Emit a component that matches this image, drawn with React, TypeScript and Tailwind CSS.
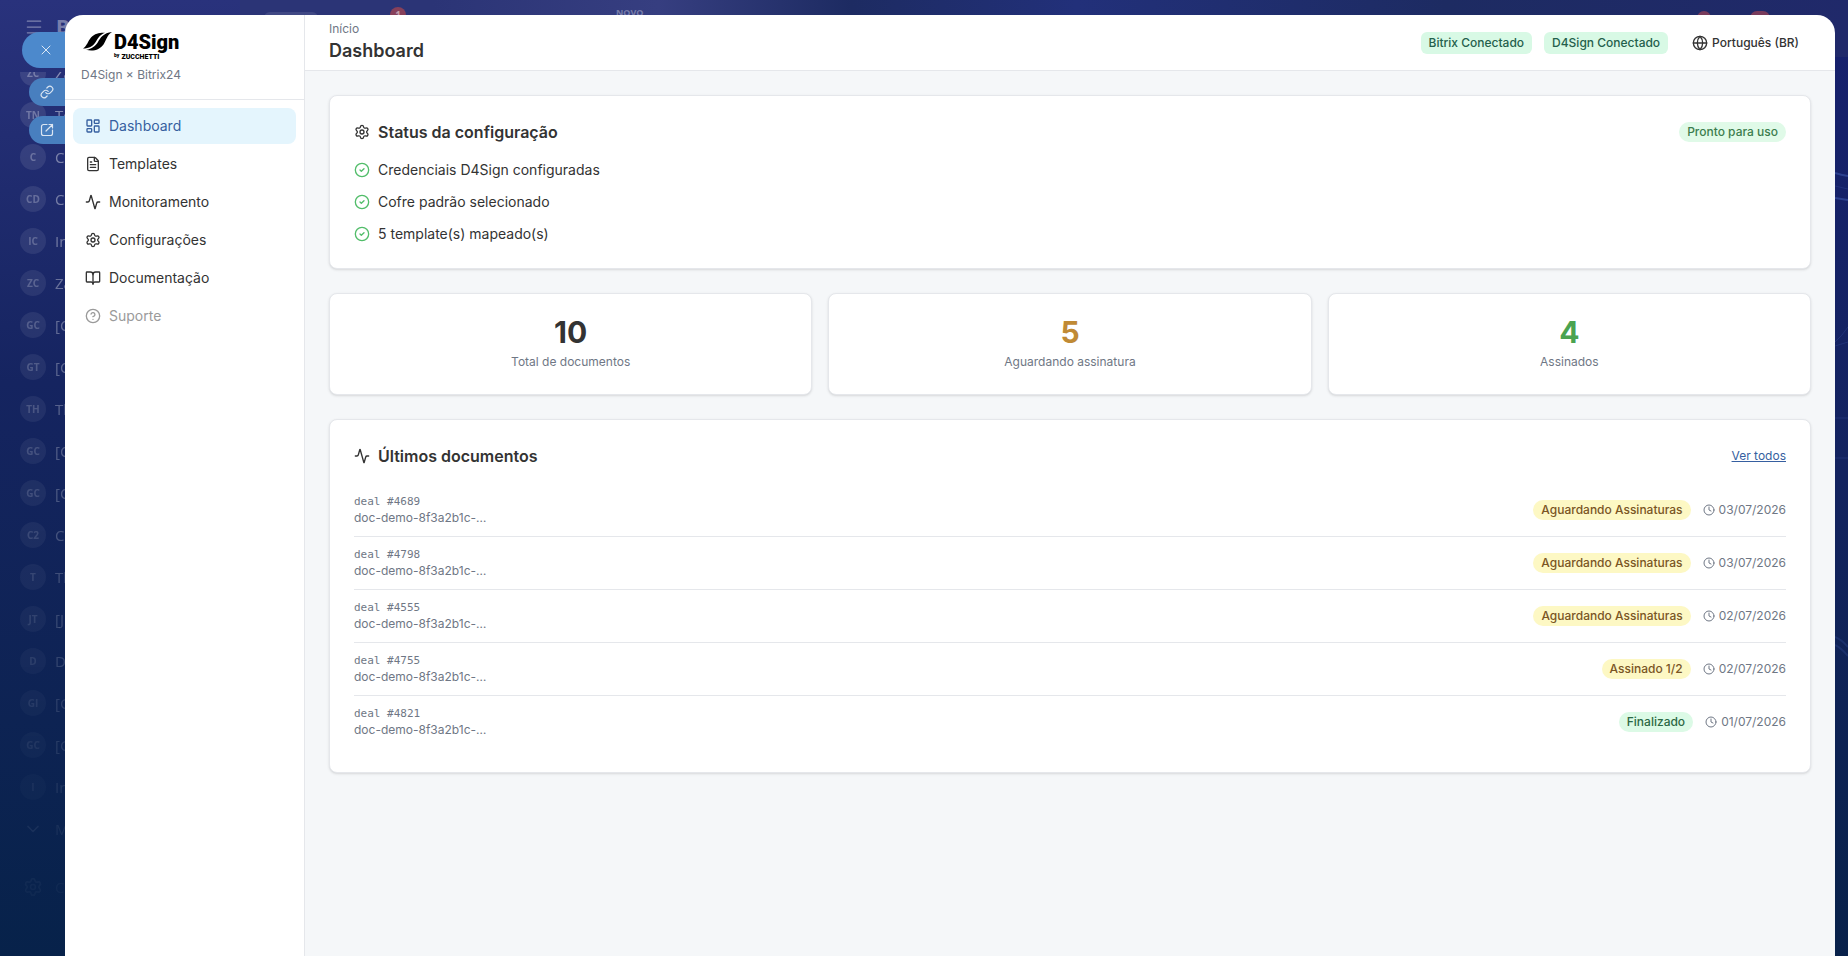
import {
    Activity,
    BookOpen,
    ChevronDown,
    CircleCheck,
    CircleQuestionMark,
    Clock,
    FileText,
    Globe,
    LayoutDashboard,
    Link,
    Menu,
    Settings,
    X,
} from "lucide-react";

const chats = [
    { initials: "ZC", name: "Za" },
    { initials: "TN", name: "To" },
    { initials: "C", name: "C" },
    { initials: "CD", name: "C" },
    { initials: "IC", name: "In" },
    { initials: "ZC", name: "Za" },
    { initials: "GC", name: "[C" },
    { initials: "GT", name: "[C" },
    { initials: "TH", name: "Th" },
    { initials: "GC", name: "[C" },
    { initials: "GC", name: "[C" },
    { initials: "C2", name: "C" },
    { initials: "T", name: "Th" },
    { initials: "JT", name: "[J" },
    { initials: "D", name: "D" },
    { initials: "GI", name: "[G" },
    { initials: "GC", name: "[G" },
    { initials: "I", name: "In" },
];

const navItems = [
    { label: "Dashboard", icon: LayoutDashboard, active: true },
    { label: "Templates", icon: FileText },
    { label: "Monitoramento", icon: Activity },
    { label: "Configurações", icon: Settings },
    { label: "Documentação", icon: BookOpen },
    { label: "Suporte", icon: CircleQuestionMark, disabled: true },
];

const checks = ["Credenciais D4Sign configuradas", "Cofre padrão selecionado", "5 template(s) mapeado(s)"];

const stats = [
    { value: 10, label: "Total de documentos", color: "text-[#333333]" },
    { value: 5, label: "Aguardando assinatura", color: "text-[#c08a35]" },
    { value: 4, label: "Assinados", color: "text-[#4aa350]" },
];

const documents = [
    { deal: "deal #4689", status: "Aguardando Assinaturas", date: "03/07/2026" },
    { deal: "deal #4798", status: "Aguardando Assinaturas", date: "03/07/2026" },
    { deal: "deal #4555", status: "Aguardando Assinaturas", date: "02/07/2026" },
    { deal: "deal #4755", status: "Assinado 1/2", date: "02/07/2026" },
    { deal: "deal #4821", status: "Finalizado", date: "01/07/2026", done: true },
];

function Logo() {
    return (
        <div className="flex items-start gap-0.5 pl-0.5 text-black">
            <svg viewBox="0 0 29 20" className="mt-px h-5 w-[29px]" fill="currentColor" aria-hidden="true">
                <path d="M0 16.5C4 14 5 9 8 5.500C12 1 18 .5 22 .8C17 3 15 6 13 9.500C10.500 14 6 16.500 0 16.500Z" />
                <path d="M29 0C24 3 23.500 8 20.500 12.500C17 17.500 10 20 3 17.800C9 17 12.500 14 15 10C17.500 5.500 20.500 1 29 0Z" />
            </svg>
            <div className="flex flex-col">
                <span className="font-[Roboto,sans-serif] text-[20px] font-black leading-[22px]">D4Sign</span>
                <span className="flex items-start gap-0.5 font-[Roboto,sans-serif] text-[7px] font-black leading-[8px]">
                    <span className="text-[5px] leading-[5px]">by</span>
                    <span>ZUCCHETTI</span>
                </span>
            </div>
        </div>
    );
}

// rounded frame with an arrow leaving its top right corner
function OpenIcon() {
    return (
        <svg viewBox="0 0 14 14" className="size-[14px]" fill="none" stroke="currentColor" strokeWidth="1.2" strokeLinecap="round" strokeLinejoin="round">
            <path d="M7 1.500H3.500a2 2 0 0 0-2 2v7a2 2 0 0 0 2 2h7a2 2 0 0 0 2-2V7" />
            <path d="M6 8L12.500 1.500M9 1.500h3.500V5" />
        </svg>
    );
}

// Bitrix24 page behind the slider
function Backdrop() {
    return (
        <div className="absolute inset-0 overflow-hidden bg-linear-to-b from-[#17206e] via-[#13235f] to-[#08214a] font-['Open_Sans',sans-serif]" aria-hidden="true">
            <div className="absolute left-60 right-0 top-0 h-[57px] bg-[linear-gradient(to_right,#2b3476_0%,#2b3476_12%,#363e80_26%,#1d2b62_38%,#22307a_52%,#1d2b62_75%,#20296a_100%)]">
                <div className="absolute left-6 top-3 h-8 w-[54px] rounded-md bg-white/10" />
                <span className="absolute left-[150px] top-[7px] size-4 rounded-full bg-[#87405a] text-center text-[10px] font-bold leading-4 text-white/50">1</span>
                <span className="absolute left-[376px] top-[7px] text-[9px] font-bold leading-[12px] text-white/35">NOVO</span>
                <span className="absolute right-[137px] top-[11px] size-[14px] rounded-full bg-[#783b5b]" />
                <span className="absolute right-[78px] top-[11px] h-[14px] w-5 rounded-full bg-[#783b5b]" />
            </div>
            <svg viewBox="0 0 13 956" className="absolute right-0 top-0 h-[956px] w-[13px]" fill="none" stroke="#5070c8" strokeOpacity="0.4">
                <path d="M0 173Q6 175 13 176M0 198L13 200" strokeWidth="2" />
                <path d="M0 186L13 189M0 342Q7 336 13 327M0 346L13 342M0 418H13M0 458H13" strokeOpacity="0.2" />
                <path d="M0 637Q7 640 13 647M0 645Q6 648 13 656" strokeWidth="2" strokeOpacity="0.18" />
            </svg>
            <div className="flex h-full w-60 flex-col bg-linear-to-b from-[#29327c] via-[#152460] via-40% to-[#07224a]">
                <div className="flex h-[72px] items-start gap-3 pl-6 pt-[17px] text-white/40">
                    <Menu className="size-5" strokeWidth={1.5} />
                    <span className="text-xl font-bold leading-5">B</span>
                </div>
                <div className="min-h-0 flex-1 overflow-hidden mask-b-from-0% mask-b-to-100%">
                    <ul className="-mt-5">
                        {chats.map((chat, index) => (
                            <li key={index} className="flex h-[42px] items-center gap-[9px] pl-5">
                                <span className="flex size-[26px] items-center justify-center rounded-full bg-white/10 text-[10px] font-bold text-white/30">
                                    {chat.initials}
                                </span>
                                <span className="text-[15px] text-white/45">{chat.name}</span>
                            </li>
                        ))}
                        <li className="flex h-[42px] items-center gap-3 pl-[23px] text-white/45">
                            <ChevronDown className="size-5" />
                            <span className="text-[15px]">M</span>
                        </li>
                        <li className="mt-4 flex h-[42px] items-center gap-3 pl-[23px] text-white/45">
                            <Settings className="size-5" />
                            <span className="text-[15px]">C</span>
                        </li>
                    </ul>
                </div>
            </div>
        </div>
    );
}

export default function App() {
    return (
        <div className="relative flex h-screen overflow-hidden pr-[13px] pt-[15px] font-[Inter,sans-serif] text-[#333333]">
            <Backdrop />

            {/* Slider controls */}
            <div className="relative flex w-[65px] shrink-0 flex-col items-end pt-[17px] text-white/80">
                <button aria-label="Fechar" className="flex h-9 w-[43px] items-center justify-center rounded-l-full bg-[#4c89cc] pl-1">
                    <X className="size-4" strokeWidth={1.5} />
                </button>
                <button aria-label="Copiar link" className="mt-[10px] flex h-7 w-9 items-center justify-center rounded-l-full bg-[#487fbf]">
                    <Link className="size-[14px]" strokeWidth={2} />
                </button>
                <button aria-label="Abrir em nova aba" className="mt-[10px] flex h-7 w-9 items-center justify-center rounded-l-full bg-[#487fbf]">
                    <OpenIcon />
                </button>
            </div>

            <div className="relative flex min-w-0 flex-1 overflow-hidden rounded-t-[18px] bg-white">
                <aside className="w-60 shrink-0 border-r border-[#e5e7eb]">
                    <div className="flex h-[85px] flex-col border-b border-[#e5e7eb] px-4 pt-4">
                        <Logo />
                        <span className="mt-1.5 text-xs text-[#6f7785]">D4Sign × Bitrix24</span>
                    </div>
                    <nav className="flex flex-col gap-0.5 p-2">
                        {navItems.map(({ label, icon: Icon, active, disabled }) => (
                            <a
                                key={label}
                                href="#"
                                className={`flex h-9 items-center gap-2 rounded-lg px-3 text-sm ${
                                    active ? "bg-[#e4f5fd] text-[#365fa0]" : disabled ? "text-[#9a9a9a]" : "text-[#333333]"
                                }`}
                            >
                                <Icon className="size-4" />
                                {label}
                            </a>
                        ))}
                    </nav>
                </aside>

                <div className="flex min-w-0 flex-1 flex-col">
                    <header className="flex h-14 shrink-0 items-center justify-between border-b border-[#e5e7eb] px-6">
                        <div className="flex flex-col">
                            <span className="text-xs text-[#6f7785]">Início</span>
                            <h1 className="text-lg font-semibold leading-7">Dashboard</h1>
                        </div>
                        <div className="flex items-center gap-3 text-xs font-medium">
                            <span className="rounded-md bg-[#d8f9e5] px-2 py-[3px] text-[#24604c]">Bitrix Conectado</span>
                            <span className="rounded-md bg-[#d8f9e5] px-2 py-[3px] text-[#24604c]">D4Sign Conectado</span>
                            <button className="flex items-center gap-1 px-3">
                                <Globe className="size-4" />
                                Português (BR)
                            </button>
                        </div>
                    </header>

                    <main className="flex flex-1 flex-col gap-6 overflow-y-auto bg-[#f5f7f9] p-6">
                        <section className="rounded-lg border border-[#e5e7eb] bg-white p-6 shadow-sm">
                            <div className="flex items-center justify-between">
                                <h2 className="flex items-center gap-2 text-base font-semibold">
                                    <Settings className="size-4" />
                                    Status da configuração
                                </h2>
                                <span className="rounded-full bg-[#e0fae8] px-2 py-0.5 text-xs font-medium text-[#3c7d4e]">Pronto para uso</span>
                            </div>
                            <ul className="mt-4 flex flex-col gap-3 text-sm">
                                {checks.map((check) => (
                                    <li key={check} className="flex items-center gap-2">
                                        <CircleCheck className="size-4 text-[#52bd6a]" />
                                        {check}
                                    </li>
                                ))}
                            </ul>
                        </section>

                        <section className="grid grid-cols-3 gap-4">
                            {stats.map((stat) => (
                                <div key={stat.label} className="rounded-lg border border-[#e5e7eb] bg-white pb-6 pt-5 text-center shadow-sm">
                                    <p className={`text-3xl font-bold ${stat.color}`}>{stat.value}</p>
                                    <p className="mt-1 text-xs text-[#6f7785]">{stat.label}</p>
                                </div>
                            ))}
                        </section>

                        <section className="rounded-lg border border-[#e5e7eb] bg-white p-6 shadow-sm">
                            <div className="flex items-center justify-between">
                                <h2 className="flex items-center gap-2 text-base font-semibold">
                                    <Activity className="size-4" />
                                    Últimos documentos
                                </h2>
                                <a href="#" className="text-xs text-[#365fa0] underline">
                                    Ver todos
                                </a>
                            </div>
                            <ul className="mt-4 divide-y divide-[#e5e7eb] text-xs text-[#6f7785]">
                                {documents.map((doc) => (
                                    <li key={doc.deal} className="flex items-center justify-between py-2.5">
                                        <div className="flex flex-col">
                                            <span className="font-['DejaVu_Sans_Mono',monospace] text-[11px] leading-4">{doc.deal}</span>
                                            <span>doc-demo-8f3a2b1c-…</span>
                                        </div>
                                        <div className="flex items-center gap-3">
                                            <span
                                                className={`rounded-full px-2 py-0.5 font-medium ${
                                                    doc.done ? "bg-[#dcfae6] text-[#2c6844]" : "bg-[#fdf8c4] text-[#7a5524]"
                                                }`}
                                            >
                                                {doc.status}
                                            </span>
                                            <span className="flex items-center gap-1">
                                                <Clock className="size-3" />
                                                {doc.date}
                                            </span>
                                        </div>
                                    </li>
                                ))}
                            </ul>
                        </section>
                    </main>
                </div>
            </div>
        </div>
    );
}
